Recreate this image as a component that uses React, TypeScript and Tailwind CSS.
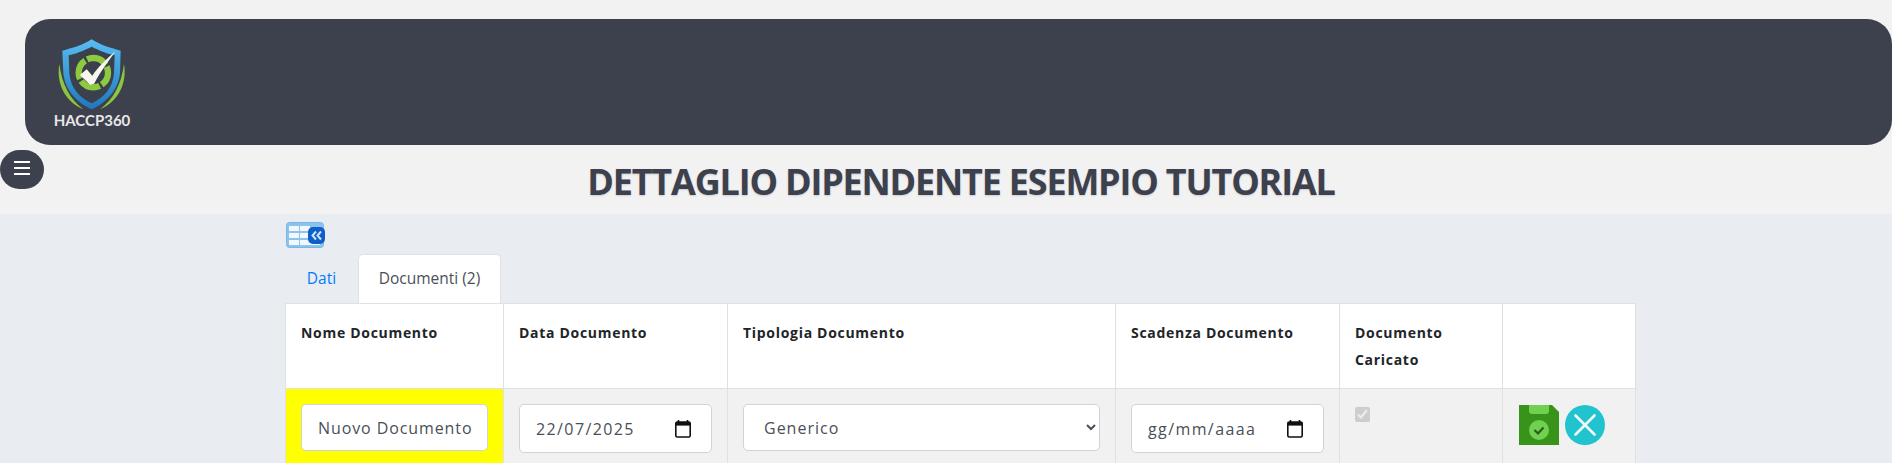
import React from 'react';

const Logo = () => (
  <div className="flex flex-col items-center w-[78px]">
    <svg width="78" height="72" viewBox="69 57 234 216">
      <defs>
        <linearGradient id="shield" x1="0" y1="0" x2="0" y2="1">
          <stop offset="0" stopColor="#58bdf2" />
          <stop offset="1" stopColor="#1f77bd" />
        </linearGradient>
      </defs>
      {/* outer arcs */}
      <path d="M88 132 C78 190 105 245 160 268 C122 240 96 195 88 132 Z" fill="#8cc63f" />
      <path d="M282 132 C292 190 265 245 210 268 C248 240 274 195 282 132 Z" fill="#8cc63f" />
      {/* shield */}
      <path d="M185 58 C210 75 245 85 272 92 L270 160 C265 210 230 248 185 268 C140 248 105 210 100 160 L97 92 C125 85 160 75 185 58 Z" fill="url(#shield)" />
      <path d="M185 80 C208 92 235 102 254 106 L252 160 C248 205 222 233 185 250 C148 233 122 205 118 160 L116 106 C135 102 162 92 185 80 Z" fill="#3a414c" />
      {/* ring */}
      <circle cx="190" cy="158" r="44" fill="none" stroke="#8fc93f" strokeWidth="19" strokeDasharray="62 7" strokeDashoffset="20" />
      <circle cx="190" cy="158" r="30" fill="none" stroke="#3a414c" strokeWidth="6" />
      {/* check */}
      <path d="M150 165 L170 148 L187 167 C205 140 232 115 256 94 C235 125 208 160 192 192 L180 194 Z" fill="#f7f6ef" />
    </svg>
    <span className="text-[15px] leading-[16px] font-bold text-[#e8e8e6] font-['Lato',sans-serif] mt-[1px]">HACCP360</span>
  </div>
);

const TableBackIcon = () => (
  <svg width="40" height="26" viewBox="0 0 40 26">
    <rect x="0.5" y="0.5" width="37" height="25" rx="3" fill="#8cc4ee" stroke="#78b6e6" />
    <rect x="3" y="4" width="10" height="5" fill="#f2f8fd" />
    <rect x="14" y="4" width="10" height="5" fill="#f2f8fd" />
    <rect x="3" y="11" width="10" height="5" fill="#f2f8fd" />
    <rect x="14" y="11" width="10" height="5" fill="#f2f8fd" />
    <rect x="3" y="18" width="10" height="5" fill="#f2f8fd" />
    <rect x="14" y="18" width="20" height="5" fill="#f2f8fd" />
    <rect x="22" y="5" width="17" height="17" rx="5" fill="#0f5fc8" />
    <path d="M30 9.5 L26.5 13.5 L30 17.5 M35 9.5 L31.5 13.5 L35 17.5" fill="none" stroke="#cfe4fa" strokeWidth="2" />
  </svg>
);

const SaveIcon = () => (
  <svg width="40" height="40" viewBox="0 0 40 40">
    <path d="M0 0 H33 L40 7 V40 H0 Z" fill="#38931a" />
    <path d="M10 0 H30 V6 Q30 9 27 9 H13 Q10 9 10 6 Z" fill="#6fd14f" />
    <circle cx="20" cy="25" r="10" fill="#6fd14f" />
    <path d="M15.5 25 L19 28.5 L24.5 22.5" fill="none" stroke="#2c5a22" strokeWidth="2.2" />
  </svg>
);

const CloseIcon = () => (
  <svg width="40" height="40" viewBox="0 0 40 40">
    <circle cx="20" cy="20" r="20" fill="#21c3cf" />
    <path d="M10.5 10.5 L29.5 29.5 M29.5 10.5 L10.5 29.5" stroke="#f2fbfc" strokeWidth="2.6" strokeLinecap="round" />
  </svg>
);

const CalendarIcon = () => (
  <svg width="16" height="18" viewBox="0 0 16 18">
    <path d="M3.5 0 V3 M12.5 0 V3" stroke="#111" strokeWidth="1.6" />
    <rect x="0.8" y="2" width="14.4" height="15" rx="1.5" fill="none" stroke="#111" strokeWidth="1.6" />
    <rect x="0.8" y="2" width="14.4" height="3.6" fill="#111" />
  </svg>
);

const DateField = ({ value }: { value: string }) => (
  <div className="flex items-center justify-between h-[49px] bg-white border border-[#ced4da] rounded-[5px] pl-[16px] pr-[20px] text-[16px] text-[#495057] tracking-[1.4px]">
    <span>{value}</span>
    <CalendarIcon />
  </div>
);

const headers = ['Nome Documento', 'Data Documento', 'Tipologia Documento', 'Scadenza Documento', 'Documento Caricato', ''];
const thClass = 'border border-[#dee2e6] px-[15px] pt-[15px] align-top text-left text-[14px] leading-[27px] font-bold text-[#212529] tracking-[0.7px]';
const tdClass = 'border border-[#dee2e6] p-[15px] align-top';

export default function App() {
  return (
    <div className="h-screen overflow-hidden bg-[#f2f2f2] font-['Open_Sans',sans-serif]">
      <div className="pt-[19px] pl-[25px]">
        <div className="h-[126px] bg-[#3d414d] rounded-[25px] pl-[28px] pt-[20px]">
          <Logo />
        </div>
      </div>

      <div className="relative h-[69px] flex items-center justify-center pl-[30px] pt-[4px]">
        <button className="absolute left-0 top-[5px] w-[44px] h-[39px] rounded-full bg-[#3d414d] flex flex-col items-center justify-center gap-[4px] pb-[4px]">
          <span className="block w-[16px] h-[2px] bg-white" />
          <span className="block w-[16px] h-[2px] bg-white" />
          <span className="block w-[16px] h-[2px] bg-white" />
        </button>
        <h1 className="text-[36px] font-bold text-[#3d414d] tracking-[-1.2px] [text-shadow:0_1px_2px_rgba(0,0,0,0.15)]">DETTAGLIO DIPENDENTE ESEMPIO TUTORIAL</h1>
      </div>

      <div className="h-full bg-[#e9ecf1] pl-[285px] pt-[8px]">
        <div className="w-[1350px]">
          <div className="h-[26px] mb-[6px] pl-[1px]">
            <TableBackIcon />
          </div>
          <div className="flex h-[49px] text-[15.5px]">
            <a className="w-[73px] flex items-center justify-center text-[#007bff]">Dati</a>
            <a className="w-[143px] flex items-center justify-center bg-white border border-b-0 border-[#dee2e6] rounded-t-[5px] text-[#495057]">Documenti (2)</a>
          </div>
          <table className="w-[1350px] table-fixed border-collapse">
            <colgroup>
              <col className="w-[218px]" />
              <col className="w-[224px]" />
              <col className="w-[388px]" />
              <col className="w-[224px]" />
              <col className="w-[163px]" />
              <col className="w-[133px]" />
            </colgroup>
            <thead>
              <tr className="h-[85px] bg-white">
                {headers.map((h) => (
                  <th key={h} className={thClass}>{h}</th>
                ))}
              </tr>
            </thead>
            <tbody>
              <tr className="bg-[#f1f1f1]">
                <td className={`${tdClass} bg-[#ffff00]`}>
                  <input readOnly value="Nuovo Documento" className="w-full h-[47px] bg-white border border-[#ced4da] rounded-[5px] pl-[16px] pr-[12px] text-[16px] text-[#495057] tracking-[0.9px] outline-none" />
                </td>
                <td className={tdClass}>
                  <DateField value="22/07/2025" />
                </td>
                <td className={tdClass}>
                  <select className="w-full h-[47px] bg-white border border-[#ced4da] rounded-[5px] px-[16px] text-[16px] text-[#495057] tracking-[1px] outline-none">
                    <option>Generico</option>
                  </select>
                </td>
                <td className={tdClass}>
                  <DateField value="gg/mm/aaaa" />
                </td>
                <td className={tdClass}>
                  <input type="checkbox" checked disabled readOnly className="block w-[15px] h-[15px] mt-[3px]" />
                </td>
                <td className={tdClass}>
                  <div className="flex gap-[6px] pl-[1px] pt-[1px]">
                    <SaveIcon />
                    <CloseIcon />
                  </div>
                </td>
              </tr>
            </tbody>
          </table>
        </div>
      </div>
    </div>
  );
}
